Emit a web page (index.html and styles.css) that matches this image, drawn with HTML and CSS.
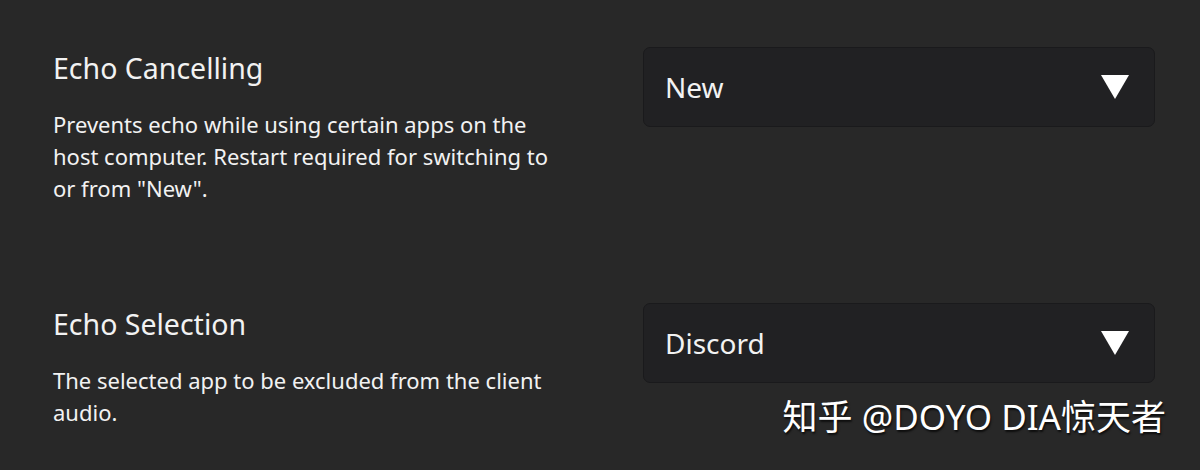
FILE: index.html
```html
<!DOCTYPE html>
<html lang="en">
<head>
    <meta charset="UTF-8">
    <title>Audio Settings</title>
    <link rel="stylesheet" href="styles.css">
</head>
<body>

    <!-- Echo cancelling -->
    <div class="setting">
        <div class="info">
            <div class="title">Echo Cancelling</div>
            <div class="desc">Prevents echo while using certain apps on the host computer. Restart required for switching to or from "New".</div>
        </div>
        <div class="select">
            <span>New</span>
            <svg class="arrow" width="28" height="24" viewBox="0 0 28 24"><polygon points="0,0 28,0 14,24" fill="#fff"/></svg>
        </div>
    </div>

    <!-- Echo selection -->
    <div class="setting">
        <div class="info">
            <div class="title">Echo Selection</div>
            <div class="desc">The selected app to be excluded from the client audio.</div>
        </div>
        <div class="select">
            <span>Discord</span>
            <svg class="arrow" width="28" height="24" viewBox="0 0 28 24"><polygon points="0,0 28,0 14,24" fill="#fff"/></svg>
        </div>
    </div>

    <div class="watermark">知乎 @DOYO DIA惊天者</div>

</body>
</html>
```

FILE: styles.css
```css
html {
    overflow: hidden;
}

body {
    font-family: "Noto Sans", sans-serif;
    background-color: #282828;
    color: #f2f2f2;
    margin: 0;
    padding: 47px 45px 0 53px;
    height: 470px;
    box-sizing: border-box;
    overflow: hidden;
    position: relative;
}

.setting {
    display: flex;
    justify-content: space-between;
    align-items: flex-start;
    height: 256px;
}

.setting + .setting {
    height: auto;
}

.info {
    width: 522px;
    padding-top: 3px;
}

.title {
    font-size: 28.5px;
    line-height: 36px;
}

.desc {
    margin-top: 22px;
    font-size: 22px;
    line-height: 32px;
}

.select {
    width: 512px;
    height: 80px;
    box-sizing: border-box;
    background-color: #212123;
    border: 1px solid #1a1a1c;
    border-radius: 7px;
    display: flex;
    align-items: center;
    justify-content: space-between;
    padding: 0 25px 0 21px;
    font-size: 28px;
}

/* watermark over bottom-right corner */
.watermark {
    position: absolute;
    right: 34px;
    bottom: 30px;
    font-family: "Noto Sans", "Noto Sans CJK SC", sans-serif;
    font-size: 35px;
    color: #fff;
    text-shadow: 1px 2px 2px rgba(0, 0, 0, 0.7);
}
```
